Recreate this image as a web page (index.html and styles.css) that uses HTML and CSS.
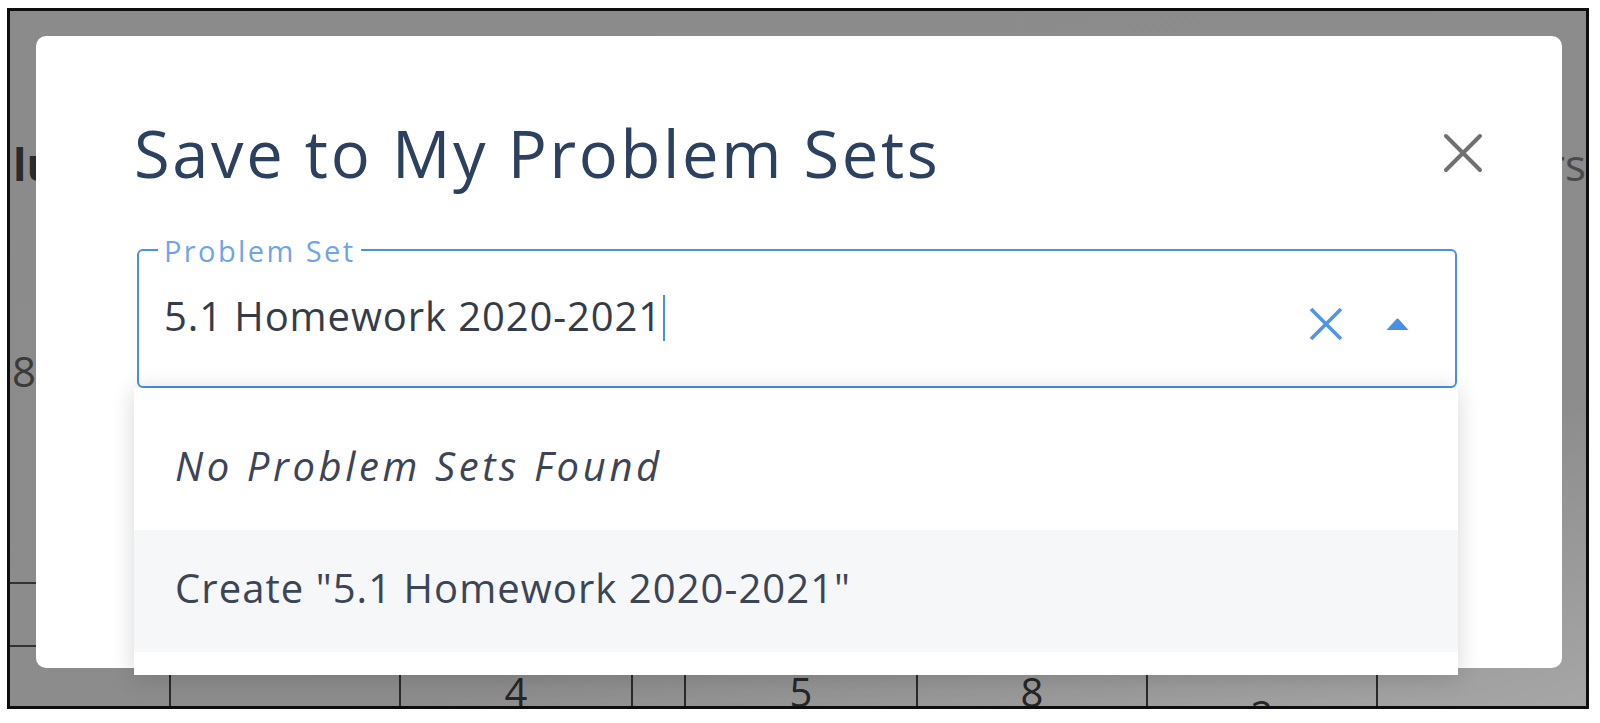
FILE: index.html
```html
<!DOCTYPE html>
<html lang="en">
<head>
<meta charset="utf-8">
<title>Save to My Problem Sets</title>
<link rel="stylesheet" href="styles.css">
</head>
<body>
<div class="frame">
  <div class="bg">
    <div class="bg-top"><span class="bg-left">lu</span><span class="bg-right">rs</span></div>
    <div class="bg-eight">8</div>
    <div class="bg-table">
      <div class="bg-row"></div>
      <div class="bg-row bg-row-b">
        <div class="bg-cell c1"></div>
        <div class="bg-cell c2"></div>
        <div class="bg-cell c3">4</div>
        <div class="bg-cell c4"></div>
        <div class="bg-cell c5">5</div>
        <div class="bg-cell c6">8</div>
        <div class="bg-cell c7 low">2</div>
        <div class="bg-cell c8"></div>
      </div>
    </div>
  </div>

  <div class="modal">
    <div class="modal-head">
      <h2 class="modal-title">Save to My Problem Sets</h2>
      <button class="close" aria-label="Close">
        <svg width="40" height="40" viewBox="0 0 40 40"><path d="M3 3 L37 37 M37 3 L3 37" stroke="#707070" stroke-width="4" stroke-linecap="round" fill="none"/></svg>
      </button>
    </div>

    <div class="field">
      <span class="field-label">Problem Set</span>
      <div class="field-value">5.1 Homework 2020-2021<span class="caret"></span></div>
      <div class="field-icons">
        <svg class="clear" width="34" height="34" viewBox="0 0 34 34"><path d="M2 2 L32 32 M32 2 L2 32" stroke="#5095e8" stroke-width="3.6" fill="none"/></svg>
        <svg class="arrow" width="23" height="12" viewBox="0 0 23 12"><path d="M0.5 12 L10.3 1.2 Q11.5 0 12.7 1.2 L22.5 12 Z" fill="#4a90e2"/></svg>
      </div>
      <div class="menu">
        <div class="menu-item empty">No Problem Sets Found</div>
        <div class="menu-item active">Create "5.1 Homework 2020-2021"</div>
      </div>
    </div>
  </div>
</div>
</body>
</html>
```
FILE: styles.css
```css
* { box-sizing: border-box; }

html, body {
  margin: 0;
  padding: 0;
  background: #ffffff;
}

body {
  font-family: "Open Sans", "Noto Sans", sans-serif;
}

.frame {
  position: relative;
  margin: 8px 0 0 7px;
  width: 1582px;
  height: 701px;
  border: 3px solid #0e0e0e;
  overflow: hidden;
  background: linear-gradient(165deg, #8b8b8b 0%, #8c8c8c 72%, #a6a6a6 100%);
}

/* dimmed page behind the dialog */
.bg {
  display: flex;
  flex-direction: column;
  color: #2d2d2d;
}

.bg-top {
  display: flex;
  justify-content: space-between;
  margin-top: 129px;
  height: 48px;
  line-height: 48px;
  padding: 0 0 0 3px;
}

.bg-left {
  font-size: 44px;
  font-weight: 700;
  color: #2a2a2a;
}

.bg-right {
  font-size: 44px;
  color: #4a4a4a;
}

.bg-eight {
  margin-top: 159px;
  padding-left: 2px;
  font-size: 42px;
  line-height: 48px;
  height: 48px;
  color: #3a3a3a;
}

.bg-table {
  margin-top: 187px;
  width: 1460px;
}

.bg-row {
  height: 63px;
  border-top: 2px solid #333;
}

.bg-row-b {
  display: flex;
  height: 61px;
}

.bg-cell {
  border-right: 2px solid #2a2a2a;
  text-align: center;
  font-size: 40px;
  line-height: 24px;
  padding-top: 33px;
  color: #262626;
}

.c1 { width: 161px; }
.c2 { width: 230px; }
.c3 { width: 232px; }
.c4 { width: 53px; }
.c5 { width: 232px; }
.c6 { width: 230px; }
.c7 { width: 230px; }
.c8 { flex: 1; border-right: 0; }
.low { padding-top: 56px; }

/* dialog */
.modal {
  position: absolute;
  left: 26px;
  top: 25px;
  width: 1526px;
  height: 632px;
  background: #ffffff;
  border-radius: 10px;
  padding: 77px 79px 0 98px;
}

.modal-head {
  display: flex;
  align-items: center;
  justify-content: space-between;
  height: 80px;
}

.modal-title {
  margin: 0;
  font-size: 65px;
  font-weight: 400;
  line-height: 80px;
  letter-spacing: 2.65px;
  color: #2c405f;
}

.close {
  display: flex;
  padding: 0;
  border: 0;
  background: none;
  width: 40px;
  height: 40px;
}

.field {
  position: relative;
  display: flex;
  align-items: center;
  margin: 56px 0 0 3px;
  width: 1320px;
  height: 139px;
  border: 2px solid #4c8fe5;
  border-radius: 6px;
  padding: 0 46px 4px 25px;
}

.field-label {
  position: absolute;
  top: -17px;
  left: 19px;
  padding: 0 6px;
  background: #ffffff;
  font-size: 29px;
  line-height: 34px;
  letter-spacing: 2.4px;
  color: #6ea5ea;
}

.field-value {
  font-size: 40px;
  line-height: 48px;
  letter-spacing: 0.9px;
  color: #343c48;
  white-space: nowrap;
}

.caret {
  display: inline-block;
  width: 2px;
  height: 46px;
  margin-left: 1px;
  vertical-align: -10px;
  background: #4a90e2;
}

.field-icons {
  margin-left: auto;
  margin-top: 15px;
  display: flex;
  align-items: center;
  gap: 43px;
}

.field-icons svg { display: block; }

.menu {
  position: absolute;
  top: calc(100% + 2px);
  left: -5px;
  width: 1324px;
  padding: 20px 0 23px;
  background: #ffffff;
  box-shadow: 0 2px 22px rgba(0, 0, 0, 0.16);
}

.menu-item {
  height: 122px;
  line-height: 115px;
  padding: 0 0 7px 41px;
  font-size: 40px;
  color: #3b4556;
  white-space: nowrap;
}

.menu-item.empty {
  font-style: italic;
  letter-spacing: 3.6px;
}

.menu-item.active {
  background: #f5f7f9;
  letter-spacing: 1.05px;
}
```
